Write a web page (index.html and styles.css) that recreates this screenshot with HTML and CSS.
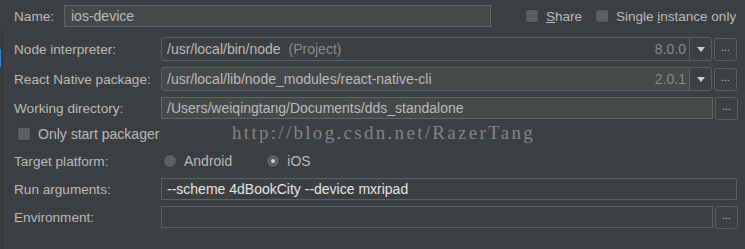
FILE: index.html
```html
<!DOCTYPE html>
<html lang="en">
<head>
  <meta charset="UTF-8">
  <title>Run Configuration</title>
  <link rel="stylesheet" href="styles.css">
</head>
<body>
  <div class="edge"><span class="edge-mark"></span></div>
  <div class="panel">
    <div class="row row-name">
      <label class="label label-name">Name:</label>
      <div class="field field-light field-name">ios-device</div>
      <span class="check"></span><span class="check-text check-top"><u>S</u>hare</span>
      <span class="check check-2"></span><span class="check-text check-top">Single <u>i</u>nstance only</span>
    </div>

    <div class="row row-combo">
      <label class="label">Node interpreter:</label>
      <div class="combo">
        <span class="combo-text">/usr/local/bin/node <span class="muted">(Project)</span></span>
        <span class="combo-ver">8.0.0</span>
        <span class="combo-arrow"><i class="tri"></i></span>
      </div>
      <span class="dots">...</span>
    </div>

    <div class="row row-combo">
      <label class="label">React Native package:</label>
      <div class="combo combo-light">
        <span class="combo-text">/usr/local/lib/node_modules/react-native-cli</span>
        <span class="combo-ver">2.0.1</span>
        <span class="combo-arrow"><i class="tri"></i></span>
      </div>
      <span class="dots">...</span>
    </div>

    <div class="row">
      <label class="label">Working directory:</label>
      <div class="field field-light field-btn">/Users/weiqingtang/Documents/dds_standalone</div>
      <span class="dots">...</span>
    </div>

    <div class="row row-pack">
      <span class="check check-pack"></span><span class="check-text">Only start packager</span>
      <span class="watermark">http://blog.csdn.net/RazerTang</span>
    </div>

    <div class="row">
      <label class="label">Target platform:</label>
      <span class="radio"></span><span class="radio-text">Android</span>
      <span class="radio radio-on"></span><span class="radio-text">iOS</span>
    </div>

    <div class="row">
      <label class="label">Run arguments:</label>
      <div class="field field-full field-bright">--scheme 4dBookCity --device mxripad</div>
    </div>

    <div class="row">
      <label class="label">Environment:</label>
      <div class="field field-btn"></div>
      <span class="dots">...</span>
    </div>
  </div>
</body>
</html>
```

FILE: styles.css
```css
body {
  margin: 0;
  width: 745px;
  height: 249px;
  background-color: #3c3f41;
  font-family: 'Liberation Sans', Arial, sans-serif;
  font-size: 13.6px;
  color: #bbbbbb;
  position: relative;
  overflow: hidden;
}
.edge {
  position: absolute;
  left: 0;
  top: 29px;
  bottom: 0;
  width: 2px;
  background: #393b3d;
  border-right: 1px solid #323436;
}
.edge-mark {
  display: block;
  margin-top: 20px;
  width: 1px;
  height: 18px;
  background: #3d7ad6;
}
.panel {
  padding: 5px 8px 0 14px;
}
.row {
  display: flex;
  align-items: center;
  height: 22px;
  margin-bottom: 6px;
  white-space: nowrap;
}
.row-name {
  margin-bottom: 10px;
}
.row-combo {
  height: 24px;
}
.row-pack {
  position: relative;
  margin-top: -2px;
  margin-bottom: 5px;
}
.label {
  width: 147px;
  flex-shrink: 0;
}
.label-name {
  width: 50px;
}
.field {
  box-sizing: border-box;
  flex-shrink: 0;
  height: 22px;
  line-height: 20px;
  padding: 0 5px;
  font-size: 14px;
  border: 1px solid #5e6060;
  background: #3c3f41;
  white-space: nowrap;
}
.field-light {
  background: #45494a;
  border-color: #646464;
}
.field-name {
  width: 427px;
  padding-left: 6px;
}
.field-btn {
  width: 552px;
}
.field-full {
  width: 576px;
}
.field-bright {
  color: #e4e4e4;
}
.combo {
  box-sizing: border-box;
  flex-shrink: 0;
  width: 551px;
  height: 24px;
  display: flex;
  align-items: center;
  border: 1px solid #5e6060;
  border-radius: 3px;
  background: #3c3f41;
  padding-left: 5px;
  font-size: 14px;
}
.combo-light {
  background: #45494a;
}
.combo-text {
  flex: 1;
  white-space: nowrap;
}
.muted {
  color: #8c8c8c;
  margin-left: 4px;
}
.combo-ver {
  color: #8c8c8c;
  margin-right: 3px;
}
.combo-arrow {
  width: 21px;
  height: 100%;
  border-left: 1px solid #5e6060;
  display: flex;
  align-items: center;
  justify-content: center;
  background: #3c3f41;
}
.tri {
  width: 0;
  height: 0;
  border-left: 4px solid transparent;
  border-right: 4px solid transparent;
  border-top: 5px solid #cfcfcf;
}
.dots {
  box-sizing: border-box;
  flex-shrink: 0;
  width: 23px;
  height: 23px;
  margin-left: 2px;
  border: 1px solid #5e6060;
  border-radius: 3px;
  text-align: center;
  line-height: 17px;
  font-size: 10px;
  color: #cfcfcf;
}
.check {
  box-sizing: border-box;
  flex-shrink: 0;
  width: 14px;
  height: 14px;
  border-radius: 3px;
  background: #5c5e60;
  border: 1px solid #353739;
  margin-left: 34px;
  margin-right: 7px;
}
.check-2 {
  margin-left: 13px;
}
.check-pack {
  margin-left: 3px;
}
.check-text {
  font-size: 14px;
}
.check-top {
  font-size: 13.5px;
}
.radio {
  box-sizing: border-box;
  width: 14px;
  height: 14px;
  border-radius: 50%;
  background: #5c5e60;
  border: 1px solid #353739;
  margin-left: 2px;
  margin-right: 7px;
  display: flex;
  align-items: center;
  justify-content: center;
}
.radio-on {
  margin-left: 34px;
}
.radio-on::after {
  content: "";
  width: 4px;
  height: 4px;
  border-radius: 50%;
  background: #d0d0d0;
}
.radio-text {
  font-size: 14px;
}
.watermark {
  position: absolute;
  left: 218px;
  top: -1px;
  font-family: 'Liberation Serif', serif;
  font-size: 19px;
  letter-spacing: 2.3px;
  color: #858585;
}
```
